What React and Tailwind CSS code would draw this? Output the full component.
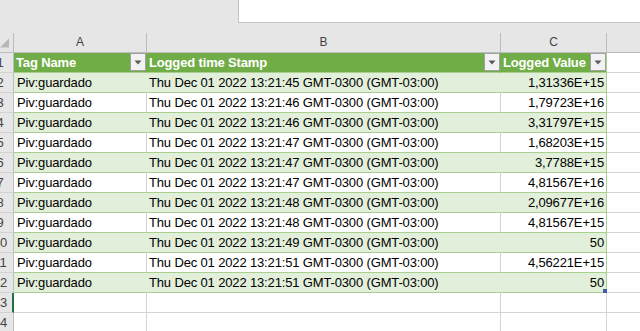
import React from 'react';

const rows = [
    ['Piv:guardado', 'Thu Dec 01 2022 13:21:45 GMT-0300 (GMT-03:00)', '1,31336E+15'],
    ['Piv:guardado', 'Thu Dec 01 2022 13:21:46 GMT-0300 (GMT-03:00)', '1,79723E+16'],
    ['Piv:guardado', 'Thu Dec 01 2022 13:21:46 GMT-0300 (GMT-03:00)', '3,31797E+15'],
    ['Piv:guardado', 'Thu Dec 01 2022 13:21:47 GMT-0300 (GMT-03:00)', '1,68203E+15'],
    ['Piv:guardado', 'Thu Dec 01 2022 13:21:47 GMT-0300 (GMT-03:00)', '3,7788E+15'],
    ['Piv:guardado', 'Thu Dec 01 2022 13:21:47 GMT-0300 (GMT-03:00)', '4,81567E+16'],
    ['Piv:guardado', 'Thu Dec 01 2022 13:21:48 GMT-0300 (GMT-03:00)', '2,09677E+16'],
    ['Piv:guardado', 'Thu Dec 01 2022 13:21:48 GMT-0300 (GMT-03:00)', '4,81567E+15'],
    ['Piv:guardado', 'Thu Dec 01 2022 13:21:49 GMT-0300 (GMT-03:00)', '50'],
    ['Piv:guardado', 'Thu Dec 01 2022 13:21:51 GMT-0300 (GMT-03:00)', '4,56221E+15'],
    ['Piv:guardado', 'Thu Dec 01 2022 13:21:51 GMT-0300 (GMT-03:00)', '50'],
];

// row number column is scrolled partly out of view, so only the right half shows
function RowHead({ n, active }) {
    return (
        <div
            className={`w-[14px] h-full shrink-0 overflow-hidden bg-[#e6e6e6] border-b border-[#d2d2d2] ${
                active ? 'border-r-2 border-r-[#217346]' : 'border-r border-r-[#bdbdbd]'
            }`}
        >
            <div className="w-[26px] -ml-[13px] text-center text-[13px] leading-[20px] text-[#444]">{n}</div>
        </div>
    );
}

function FilterButton() {
    return (
        <div className="w-[16px] h-[18px] shrink-0 border border-[#a0a0a0] bg-[#f2f2f2] flex items-center justify-center">
            <svg width="8" height="5" viewBox="0 0 8 5">
                <path d="M0.5 0.5 H7.5 L4 4.5 Z" fill="#595959" />
            </svg>
        </div>
    );
}

export default function App() {
    return (
        <div
            className="w-[640px] h-[331px] overflow-hidden bg-[#e6e6e6] text-black"
            style={{ fontFamily: '"Liberation Sans", Arial, sans-serif' }}
        >
            {/* formula bar area */}
            <div className="h-[33px] flex items-start">
                <div className="w-[238px]" />
                <div className="w-[402px] h-[23px] bg-white border-l border-b border-[#c4c4c4]" />
            </div>

            {/* column letters */}
            <div className="h-[20px] flex border-b border-[#bdbdbd] text-[12px] text-[#444] leading-[19px]">
                <div className="w-[14px] shrink-0 border-r border-[#bdbdbd] flex items-end justify-end pr-[4px] pb-[4px]">
                    <svg width="10" height="10" viewBox="0 0 10 10">
                        <path d="M10 0 V10 H0 Z" fill="#b6b6b6" />
                    </svg>
                </div>
                <div className="w-[133px] shrink-0 border-r border-[#bdbdbd] text-center">A</div>
                <div className="w-[354px] shrink-0 border-r border-[#bdbdbd] text-center">B</div>
                <div className="w-[106px] shrink-0 border-r border-[#bdbdbd] text-center">C</div>
                <div className="flex-1" />
            </div>

            {/* table header */}
            <div className="h-[20px] flex text-[13px] tracking-[-0.15px] leading-[20px]">
                <RowHead n={1} />
                <div className="w-[133px] shrink-0 bg-[#70ad47] border-b border-r border-b-[#a9d08e] border-r-[#70ad47] flex justify-between pl-[2px] text-white font-bold">
                    <span>Tag Name</span>
                    <FilterButton />
                </div>
                <div className="w-[354px] shrink-0 bg-[#70ad47] border-b border-r border-b-[#a9d08e] border-r-[#70ad47] flex justify-between pl-[2px] text-white font-bold">
                    <span>Logged time Stamp</span>
                    <FilterButton />
                </div>
                <div className="w-[106px] shrink-0 bg-[#70ad47] border-b border-r border-b-[#a9d08e] border-r-[#a9d08e] flex justify-between pl-[2px] text-white font-bold">
                    <span>Logged Value</span>
                    <FilterButton />
                </div>
                <div className="flex-1 bg-white border-b border-[#d4d4d4]" />
            </div>

            {rows.map((r, i) => {
                const banded = i % 2 === 0;
                const bg = banded ? 'bg-[#e2efda]' : 'bg-white';
                const divider = banded ? 'border-r-[#e2efda]' : 'border-r-[#d4d4d4]';
                const last = i === rows.length - 1;
                return (
                    <div key={i} className="h-[20px] flex text-[13px] tracking-[-0.15px] leading-[20px]">
                        <RowHead n={i + 2} />
                        <div className={`w-[133px] shrink-0 ${bg} border-b border-r border-b-[#a9d08e] ${divider} pl-[3px] whitespace-nowrap overflow-hidden`}>
                            {r[0]}
                        </div>
                        <div className={`w-[354px] shrink-0 ${bg} border-b border-r border-b-[#a9d08e] ${divider} pl-[2px] whitespace-nowrap overflow-hidden`}>
                            {r[1]}
                        </div>
                        <div className={`relative w-[106px] shrink-0 ${bg} border-b border-r border-b-[#a9d08e] border-r-[#a9d08e] pr-[2px] text-right whitespace-nowrap`}>
                            {r[2]}
                            {last && <div className="absolute right-[-1px] bottom-[-1px] w-[4px] h-[4px] bg-[#4356b0]" />}
                        </div>
                        <div className="flex-1 bg-white border-b border-[#d4d4d4]" />
                    </div>
                );
            })}

            {[13, 14].map((n) => (
                <div key={n} className="h-[20px] flex bg-white">
                    <RowHead n={n} active={n === 13} />
                    <div className="w-[133px] shrink-0 border-b border-r border-[#d4d4d4]" />
                    <div className="w-[354px] shrink-0 border-b border-r border-[#d4d4d4]" />
                    <div className="w-[106px] shrink-0 border-b border-r border-[#d4d4d4]" />
                    <div className="flex-1 border-b border-[#d4d4d4]" />
                </div>
            ))}
        </div>
    );
}
